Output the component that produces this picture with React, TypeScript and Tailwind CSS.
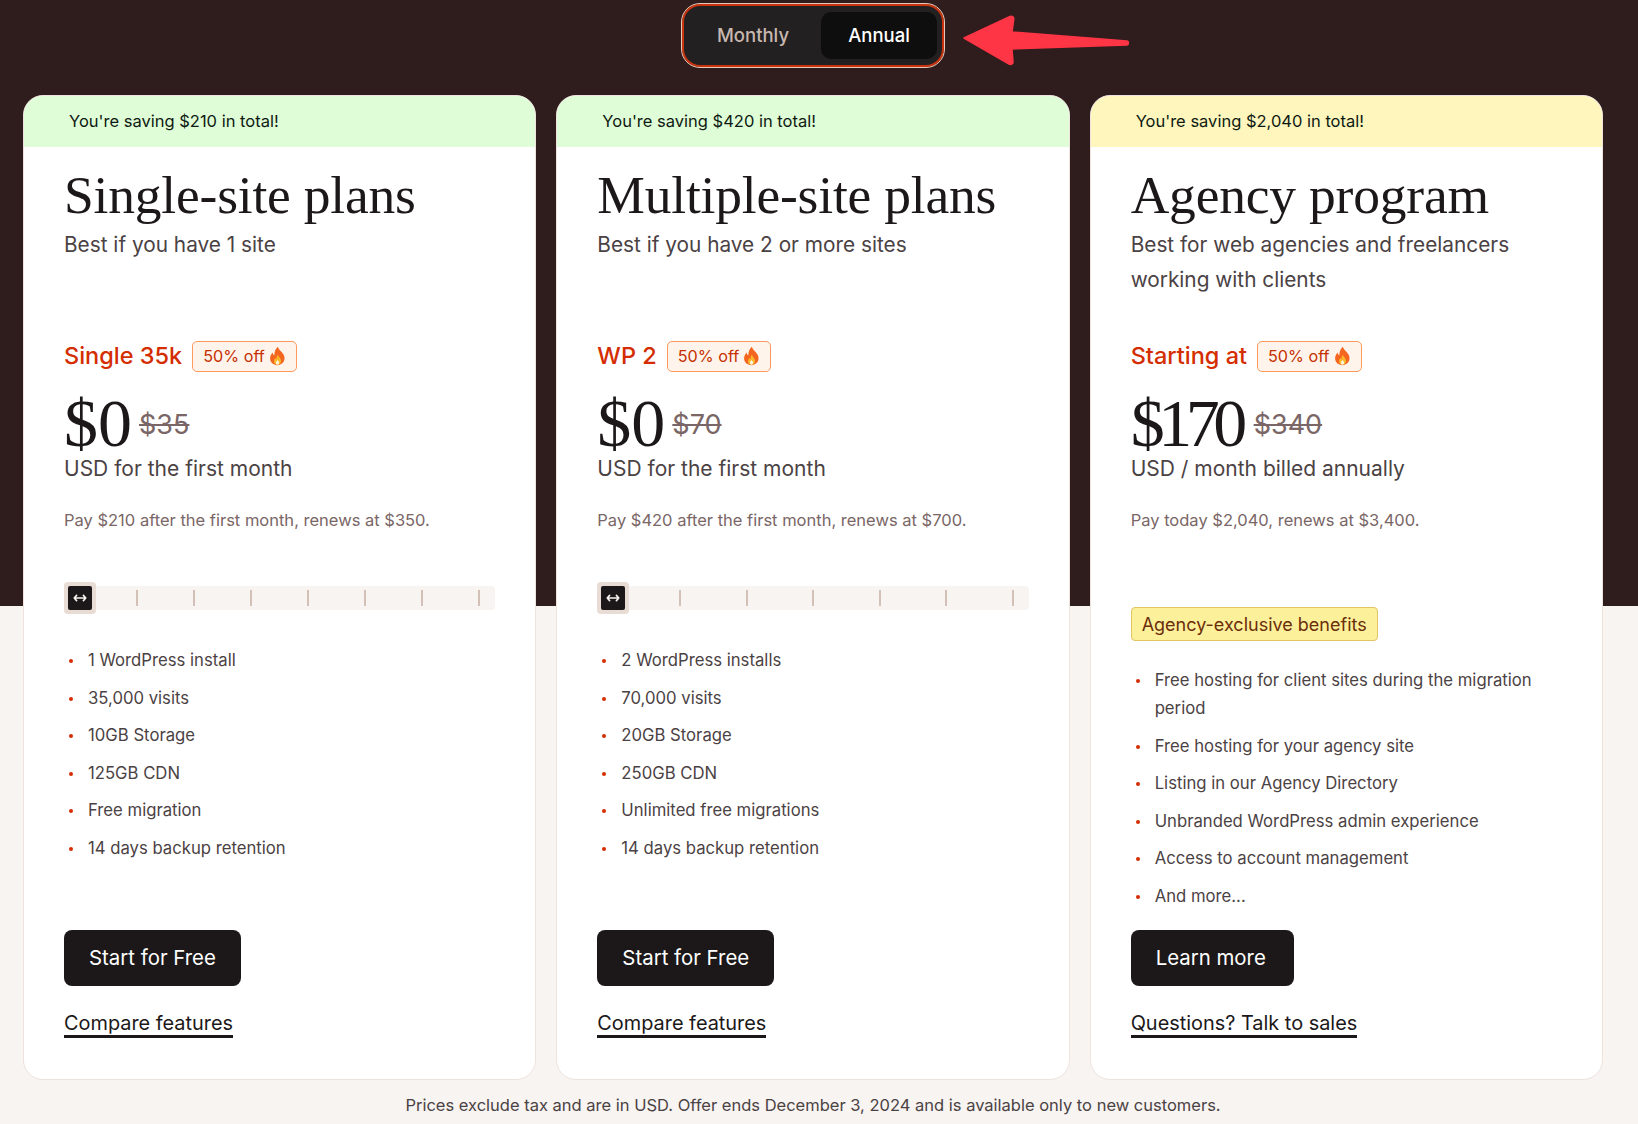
import React from "react";

const sans = "font-['Inter','Noto_Sans',sans-serif]";
const serif = "font-['Liberation_Serif',serif]";

function Flame() {
  return (
    <svg width="17" height="20" viewBox="0 0 16 19" className="shrink-0">
      <path d="M8.4 0.6C9 3.6 12 5 13.8 8.2C15.6 11.4 15 16.8 8.4 18.2C2.4 18.2 0.2 13.8 1.2 10C1.7 8.3 2.6 7.2 3.4 6.2C3.6 7.6 4 8.4 5 8.9C4.9 5.6 6 2.6 8.4 0.6Z" fill="#f4661f" />
      <path d="M8.3 8.2C8.6 10 11.4 11.4 11.4 14.2C11.4 16.4 9.8 17.8 8 17.8C5.9 17.8 4.5 16.3 4.7 14.2C4.8 12.9 5.5 12.2 6.1 11.4C6.4 12 6.7 12.3 7.1 12.5C7 11 7.4 9.4 8.3 8.2Z" fill="#fcb62b" />
      <path d="M8 13C8.3 13.9 9.8 14.6 9.6 16C9.4 17.2 8.8 17.8 8 17.8C7 17.8 6.3 17 6.4 16C6.5 14.8 7.6 14.2 8 13Z" fill="#fff3d6" />
    </svg>
  );
}

function Slider({ ticks }: { ticks: number[] }) {
  return (
    <div className="relative h-[32px] flex items-center">
      <div className="w-full h-[24px] rounded-[4px] bg-[#f8f4f1] flex items-center relative">
        {ticks.map((t) => (
          <span key={t} className="absolute top-[4px] h-[16px] w-[2px] bg-[#d3c1b8]" style={{ left: t }} />
        ))}
      </div>
      <div className="absolute left-0 top-0 w-[32px] h-[32px] rounded-[4px] bg-[#e9dcd4] flex items-center justify-center">
        <div className="w-[24px] h-[24px] rounded-[2px] bg-[#1c1819] flex items-center justify-center">
          <svg width="14" height="8" viewBox="0 0 14 8" fill="none" stroke="#f8f4f1" strokeWidth="1.6" strokeLinecap="round" strokeLinejoin="round">
            <path d="M1.2 4H12.8M3.6 1.4L1.2 4L3.6 6.6M10.4 1.4L12.8 4L10.4 6.6" />
          </svg>
        </div>
      </div>
    </div>
  );
}

type Plan = {
  banner: string;
  bannerBg: string;
  title: string;
  sub: React.ReactNode;
  name: string;
  price: string;
  priceClass: string;
  old: string;
  unit: string;
  note: string;
  ticks?: number[];
  features: string[];
  cta: string;
  ctaClass: string;
  link: string;
};

const plans: Plan[] = [
  {
    banner: "You're saving $210 in total!",
    bannerBg: "bg-[#dffdd7]",
    title: "Single-site plans",
    sub: "Best if you have 1 site",
    name: "Single 35k",
    price: "$0",
    priceClass: "tracking-[0px]",
    old: "$35",
    unit: "USD for the first month",
    note: "Pay $210 after the first month, renews at $350.",
    ticks: [72, 129, 186, 243, 300, 357, 414],
    features: ["1 WordPress install", "35,000 visits", "10GB Storage", "125GB CDN", "Free migration", "14 days backup retention"],
    cta: "Start for Free",
    ctaClass: "px-[25px]",
    link: "Compare features",
  },
  {
    banner: "You're saving $420 in total!",
    bannerBg: "bg-[#dffdd7]",
    title: "Multiple-site plans",
    sub: "Best if you have 2 or more sites",
    name: "WP 2",
    price: "$0",
    priceClass: "tracking-[0px]",
    old: "$70",
    unit: "USD for the first month",
    note: "Pay $420 after the first month, renews at $700.",
    ticks: [82, 148.5, 215, 281.5, 348, 414.5],
    features: ["2 WordPress installs", "70,000 visits", "20GB Storage", "250GB CDN", "Unlimited free migrations", "14 days backup retention"],
    cta: "Start for Free",
    ctaClass: "px-[25px]",
    link: "Compare features",
  },
  {
    banner: "You're saving $2,040 in total!",
    bannerBg: "bg-[#fef6bd]",
    title: "Agency program",
    sub: "Best for web agencies and freelancers working with clients",
    name: "Starting at",
    price: "$170",
    priceClass: "tracking-[-6.5px] mr-[6px]",
    old: "$340",
    unit: "USD / month billed annually",
    note: "Pay today $2,040, renews at $3,400.",
    features: [
      "Free hosting for client sites during the migration period",
      "Free hosting for your agency site",
      "Listing in our Agency Directory",
      "Unbranded WordPress admin experience",
      "Access to account management",
      "And more...",
    ],
    cta: "Learn more",
    ctaClass: "px-[25px] w-[163px]",
    link: "Questions? Talk to sales",
  },
];

function Card({ p }: { p: Plan }) {
  return (
    <div className="flex-1 min-w-0 h-[985px] bg-white rounded-[20px] border border-[#eee3dd] overflow-hidden flex flex-col">
      <div className={`${p.bannerBg} h-[51px] shrink-0 pl-[45px] pt-[15px] text-[16.5px] leading-[20px] text-[#0f1a12]`}>{p.banner}</div>
      <div className="flex-1 px-[40px] flex flex-col">
        <h2 className={`${serif} text-[53.5px] leading-[64px] mt-[16px] text-[#1c1819] font-normal tracking-[-0.2px] whitespace-nowrap`}>{p.title}</h2>
        <p className="text-[20.8px] leading-[35px] text-[#4b4244] h-[70px] mt-[0px] pr-[30px]">{p.sub}</p>
        <div className="flex items-center gap-[10px] mt-[43px] h-[32px]">
          <span className="text-[23.5px] leading-[32px] text-[#d42d00] font-medium">{p.name}</span>
          <span className="h-[31px] flex items-center gap-[4px] px-[10px] rounded-[5px] border border-[#ff9a5c] bg-[#fff4ec] text-[16.2px] text-[#c43000]">
            50% off <Flame />
          </span>
        </div>
        <div className="flex items-center gap-[7px] mt-[23px] h-[56px]">
          <span className={`${serif} ${p.priceClass} text-[68px] leading-[56px] text-[#1c1819]`}>{p.price}</span>
          <span className="text-[27px] leading-[56px] text-[#7a6666] line-through mt-[4px]">{p.old}</span>
        </div>
        <p className="text-[21px] leading-[30px] text-[#4b4244] mt-[3px]">{p.unit}</p>
        <p className="text-[16.5px] leading-[24px] text-[#7a6666] mt-[24px]">{p.note}</p>
        {p.ticks ? (
          <>
            <div className="mt-[50px]">
              <Slider ticks={p.ticks} />
            </div>
            <div className="mt-[32px]" />
          </>
        ) : (
          <>
            <div className="mt-[75px] self-start h-[34px] flex items-center px-[10px] rounded-[4px] border border-[#e3c463] bg-[#fdf09a] text-[18px] text-[#6b2d0a]">
              Agency-exclusive benefits
            </div>
            <div className="mt-[25px]" />
          </>
        )}
        <ul className="flex flex-col gap-[9.6px]">
          {p.features.map((f) => (
            <li key={f} className="flex text-[16.7px] leading-[28px] text-[#4b4244]">
              <span className="w-[24px] shrink-0 flex pl-[5px] pt-[13px]">
                <span className="w-[4px] h-[4px] rounded-full bg-[#d42d00]" />
              </span>
              <span>{f}</span>
            </li>
          ))}
        </ul>
        <div className="mt-auto pb-[41px]">
          <a className={`${p.ctaClass} inline-flex items-center h-[56px] rounded-[8px] bg-[#1c1819] text-white text-[20.4px]`}>{p.cta}</a>
          <div className="mt-[26px]">
            <a className="inline-block text-[19.9px] leading-[23px] text-[#1c1819] border-b-[3px] border-[#1c1819]">{p.link}</a>
          </div>
        </div>
      </div>
    </div>
  );
}

export default function App() {
  return (
    <div className={`${sans} relative w-[1638px] h-[1124px] overflow-hidden bg-[linear-gradient(to_bottom,#2f1c1c_606px,#f8f4f1_606px)]`}>
      <div className="h-[95px] pt-[4px] flex justify-center pr-[12px]">
        <div className="h-[63px] w-[262px] rounded-[18px] border-[2px] border-[#c8330f] outline outline-1 outline-[#e8c8b8] bg-[#232021] pt-[6px] pr-[5px] pb-[6px] pl-[6px] flex">
          <div className="flex-1 flex items-center justify-center pr-[5px] text-[18.5px] font-medium text-[#c9b8b0]">Monthly</div>
          <div className="w-[116px] rounded-[10px] bg-[#0f0e0e] flex items-center justify-center text-[18.5px] font-medium text-white">Annual</div>
        </div>
      </div>
      <svg className="absolute left-[960px] top-[12px]" width="174" height="56" viewBox="0 0 174 56">
        <path d="M4 26L50 4.5C52 3.5 54 5 53.8 7L52 20L167 29C169 29.2 169 32.8 167 33L52 37L53 50C53.2 52 51 53 49 52Z" fill="#fd3545" stroke="#fd3545" strokeWidth="1.5" strokeLinejoin="round" />
      </svg>
      <div className="flex gap-[20px] px-[23px] pr-[35px]">
        {plans.map((p) => (
          <Card key={p.title} p={p} />
        ))}
      </div>
      <p className="text-center text-[16.5px] leading-[24px] text-[#4b4244] mt-[13px] pr-[12px]">
        Prices exclude tax and are in USD. Offer ends December 3, 2024 and is available only to new customers.
      </p>
    </div>
  );
}
